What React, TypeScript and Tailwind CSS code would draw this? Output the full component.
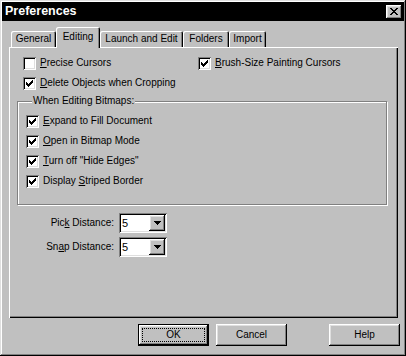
import React from "react";

const raised =
  "shadow-[inset_-1px_-1px_#000,inset_1px_1px_#fff,inset_-2px_-2px_#808080,inset_2px_2px_#dfdfdf]";
const sunken =
  "shadow-[inset_1px_1px_#808080,inset_-1px_-1px_#fff,inset_2px_2px_#000,inset_-2px_-2px_#dfdfdf]";

function CheckMark() {
  return (
    <svg width="7" height="7" viewBox="0 0 7 7" shapeRendering="crispEdges">
      <path
        fill="#000"
        d="M6 0h1v1h-1z M5 1h2v1h-2z M0 2h1v1h-1z M4 2h3v1h-3z M0 3h2v1h-2z M3 3h3v1h-3z M0 4h5v1h-5z M1 5h3v1h-3z M2 6h1v1h-1z"
      />
    </svg>
  );
}

function Box({ checked }: { checked: boolean }) {
  return (
    <span
      className={`w-[13px] h-[13px] bg-white shrink-0 flex items-center justify-center ${sunken}`}
    >
      {checked && <CheckMark />}
    </span>
  );
}

function CheckRow({
  checked,
  children,
}: {
  checked: boolean;
  children: React.ReactNode;
}) {
  return (
    <div className="h-[20px] flex items-center gap-[4px] whitespace-nowrap">
      <Box checked={checked} />
      <span>{children}</span>
    </div>
  );
}

function U({ children }: { children: React.ReactNode }) {
  return <span className="underline underline-offset-[1px]">{children}</span>;
}

function Combo() {
  return (
    <div className={`w-[48px] h-[20px] bg-white flex items-center p-[2px] ${sunken}`}>
      <span className="flex-1 pl-[1px] text-[11px] leading-none">5</span>
      <span
        className={`w-[16px] h-[16px] bg-[#c0c0c0] flex items-center justify-center ${raised}`}
      >
        <svg width="7" height="4" viewBox="0 0 7 4" shapeRendering="crispEdges">
          <path fill="#000" d="M0 0h7v1H0z M1 1h5v1H1z M2 2h3v1H2z M3 3h1v1H3z" />
        </svg>
      </span>
    </div>
  );
}

function Tab({
  label,
  w,
  selected,
}: {
  label: string;
  w: string;
  selected?: boolean;
}) {
  return (
    <div
      className={`${w} ${
        selected ? "h-[21px] -mb-[1px] pb-[2px]" : "h-[16px]"
      } bg-[#c0c0c0] rounded-t-[2px] flex items-center justify-center shadow-[inset_1px_1px_#fff,inset_-1px_0_#000,inset_-2px_0_#808080]`}
    >
      {label}
    </div>
  );
}

function Button({
  children,
  def,
}: {
  children: React.ReactNode;
  def?: boolean;
}) {
  if (def) {
    return (
      <div className="w-[71px] h-[22px] border border-black flex">
        <div className={`flex-1 bg-[#c0c0c0] p-[3px] flex ${raised}`}>
          <div className="flex-1 border border-dotted border-black flex items-center justify-center">
            {children}
          </div>
        </div>
      </div>
    );
  }
  return (
    <div
      className={`w-[71px] h-[22px] bg-[#c0c0c0] flex items-center justify-center ${raised}`}
    >
      {children}
    </div>
  );
}

export default function App() {
  return (
    <div
      className={`w-[406px] h-[356px] bg-[#c0c0c0] p-[2px] flex flex-col text-black text-[10px] leading-[12px] font-['Liberation_Sans',Arial,sans-serif] shadow-[inset_-1px_-1px_#000,inset_1px_1px_#dfdfdf,inset_-2px_-2px_#808080,inset_2px_2px_#fff]`}
    >
      {/* Title bar */}
      <div className="h-[19px] bg-black flex items-center justify-between pl-[3px] pr-[2px]">
        <span className="text-white font-bold text-[12.5px] leading-none">
          Preferences
        </span>
        <span
          className={`w-[16px] h-[14px] bg-[#c0c0c0] flex items-center justify-center ${raised}`}
        >
          <svg width="8" height="7" viewBox="0 0 8 7" shapeRendering="crispEdges">
            <path
              fill="#000"
              d="M0 0h2v1H0z M6 0h2v1H6z M1 1h2v1H1z M5 1h2v1H5z M2 2h4v1H2z M3 3h2v1H3z M2 4h4v1H2z M1 5h2v1H1z M5 5h2v1H5z M0 6h2v1H0z M6 6h2v1H6z"
            />
          </svg>
        </span>
      </div>

      {/* Tabs */}
      <div className="mt-[6px] ml-[9px] h-[20px] flex items-end relative z-10">
        <Tab label="General" w="w-[45px]" />
        <Tab label="Editing" w="w-[44px]" selected />
        <Tab label="Launch and Edit" w="w-[83px]" />
        <Tab label="Folders" w="w-[46px]" />
        <Tab label="Import" w="w-[37px]" />
      </div>

      {/* Panel */}
      <div className="ml-[7px] w-[389px] h-[271px] shadow-[inset_1px_1px_#fff,inset_-1px_-1px_#000,inset_-2px_-2px_#808080]">
        <div className="pt-[6px] pl-[14px] flex">
          <div className="w-[175px]">
            <CheckRow checked={false}>
              <U>P</U>recise Cursors
            </CheckRow>
            <CheckRow checked>
              <U>D</U>elete Objects when Cropping
            </CheckRow>
          </div>
          <div>
            <CheckRow checked>
              <U>B</U>rush-Size Painting Cursors
            </CheckRow>
          </div>
        </div>

        <fieldset className="mt-[2px] ml-[8px] w-[370px] border border-[#808080] shadow-[1px_1px_#fff,inset_1px_1px_#fff] pl-[8px] pb-[13px]">
          <legend className="ml-[6px] px-[1px] bg-[#c0c0c0] leading-[12px]">
            When Editing Bitmaps:
          </legend>
          <div className="pt-[4px]">
            <CheckRow checked>
              <U>E</U>xpand to Fill Document
            </CheckRow>
            <CheckRow checked>
              <U>O</U>pen in Bitmap Mode
            </CheckRow>
            <CheckRow checked>
              <U>T</U>urn off &quot;Hide Edges&quot;
            </CheckRow>
            <CheckRow checked>
              Display <U>S</U>triped Border
            </CheckRow>
          </div>
        </fieldset>

        <div className="mt-[8px] flex flex-col gap-[4px]">
          <div className="h-[20px] flex items-center">
            <span className="w-[105px] text-right whitespace-nowrap">
              Pic<U>k</U> Distance:
            </span>
            <div className="ml-[5px]">
              <Combo />
            </div>
          </div>
          <div className="h-[20px] flex items-center">
            <span className="w-[105px] text-right whitespace-nowrap">
              Sn<U>a</U>p Distance:
            </span>
            <div className="ml-[5px]">
              <Combo />
            </div>
          </div>
        </div>
      </div>

      {/* Buttons */}
      <div className="mt-[6px] ml-[136px] flex">
        <Button def>OK</Button>
        <div className="ml-[7px]">
          <Button>Cancel</Button>
        </div>
        <div className="ml-[42px]">
          <Button>Help</Button>
        </div>
      </div>
    </div>
  );
}
